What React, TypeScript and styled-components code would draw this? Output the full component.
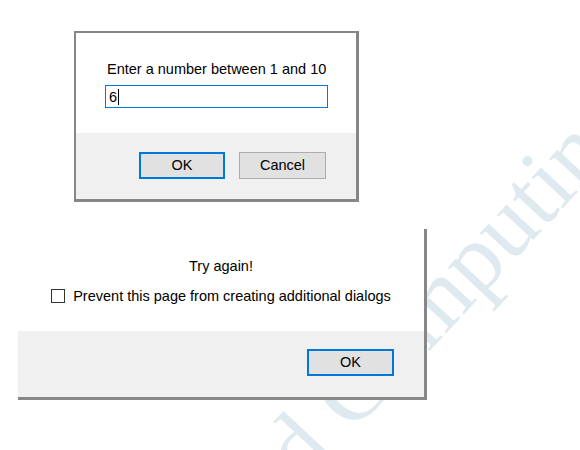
import React from "react";
import styled, { createGlobalStyle } from "styled-components";

const Global = createGlobalStyle`
  html, body { margin: 0; padding: 0; background: #ffffff; }
  body { font-family: "Liberation Sans", Arial, sans-serif; }
`;

const Page = styled.div`
  position: relative;
  width: 580px;
  height: 450px;
  overflow: hidden;
  background: #ffffff;
  display: flex;
  flex-direction: column;
  align-items: flex-start;
`;

const Watermark = styled.div`
  position: absolute;
  left: 246px;
  top: 432px;
  transform-origin: 0 0;
  transform: rotate(-47deg);
  font-family: "Liberation Serif", "Times New Roman", serif;
  font-size: 95px;
  line-height: 1;
  color: #dfeaf0;
  white-space: nowrap;
  pointer-events: none;
  z-index: 0;
`;

const Dialog = styled.div<{ $cropped?: boolean; $width: number; $left: number; $top: number }>`
  position: relative;
  z-index: 1;
  box-sizing: border-box;
  width: ${(p) => p.$width}px;
  margin-left: ${(p) => p.$left}px;
  margin-top: ${(p) => p.$top}px;
  background: #ffffff;
  border-style: solid;
  border-color: #878787;
  border-width: ${(p) => (p.$cropped ? "0 3px 3px 0" : "2px 3px 3px 2px")};
  display: flex;
  flex-direction: column;
  color: #000;
  font-size: 14.5px;
`;

const Body = styled.div<{ $height: number; $padTop: number; $center?: boolean }>`
  box-sizing: border-box;
  height: ${(p) => p.$height}px;
  padding: ${(p) => p.$padTop}px 0 0 ${(p) => (p.$center ? 0 : 29)}px;
  display: flex;
  flex-direction: column;
  align-items: ${(p) => (p.$center ? "center" : "flex-start")};
`;

const Message = styled.div<{ $indent?: number }>`
  line-height: 16px;
  padding-left: ${(p) => p.$indent ?? 0}px;
`;

const TextField = styled.div`
  box-sizing: border-box;
  margin-top: 8px;
  width: 223px;
  height: 23px;
  border: 1px solid #0078d7;
  padding: 0 0 0 3px;
  display: flex;
  align-items: center;
  font-size: 14.5px;
`;

const Caret = styled.span`
  display: inline-block;
  width: 1px;
  height: 16px;
  background: #000;
  margin-left: 1px;
`;

const CheckRow = styled.label`
  margin-top: 14px;
  display: flex;
  align-items: center;
  gap: 8px;
  line-height: 16px;
`;

const CheckBox = styled.span`
  box-sizing: border-box;
  width: 14px;
  height: 14px;
  border: 1px solid #333;
  background: #fff;
`;

const Footer = styled.div<{ $padTop: number }>`
  box-sizing: border-box;
  height: 66px;
  background: #f0f0f0;
  display: flex;
  justify-content: flex-end;
  align-items: flex-start;
  gap: 14px;
  padding: ${(p) => p.$padTop}px 30px 0 0;
`;

const Button = styled.button<{ $primary?: boolean; $w: number }>`
  box-sizing: border-box;
  width: ${(p) => p.$w}px;
  height: 27px;
  margin: 0;
  padding: 0;
  background: #e1e1e1;
  border: ${(p) => (p.$primary ? "2px solid #0078d7" : "1px solid #adadad")};
  font-family: "Liberation Sans", Arial, sans-serif;
  font-size: 14.5px;
  color: #000;
  line-height: 1;
`;

export default function App() {
  return (
    <Page>
      <Global />
      <Watermark>d Computing</Watermark>
      <Dialog $width={285} $left={74} $top={31}>
        <Body $height={100} $padTop={28}>
          <Message $indent={2}>Enter a number between 1 and 10</Message>
          <TextField>
            6<Caret />
          </TextField>
        </Body>
        <Footer $padTop={19}>
          <Button $primary $w={86}>OK</Button>
          <Button $w={87}>Cancel</Button>
        </Footer>
      </Dialog>
      <Dialog $cropped $width={409} $left={18} $top={27}>
        <Body $height={102} $padTop={29} $center>
          <Message>Try again!</Message>
          <CheckRow>
            <CheckBox />
            Prevent this page from creating additional dialogs
          </CheckRow>
        </Body>
        <Footer $padTop={18}>
          <Button $primary $w={87}>OK</Button>
        </Footer>
      </Dialog>
    </Page>
  );
}
